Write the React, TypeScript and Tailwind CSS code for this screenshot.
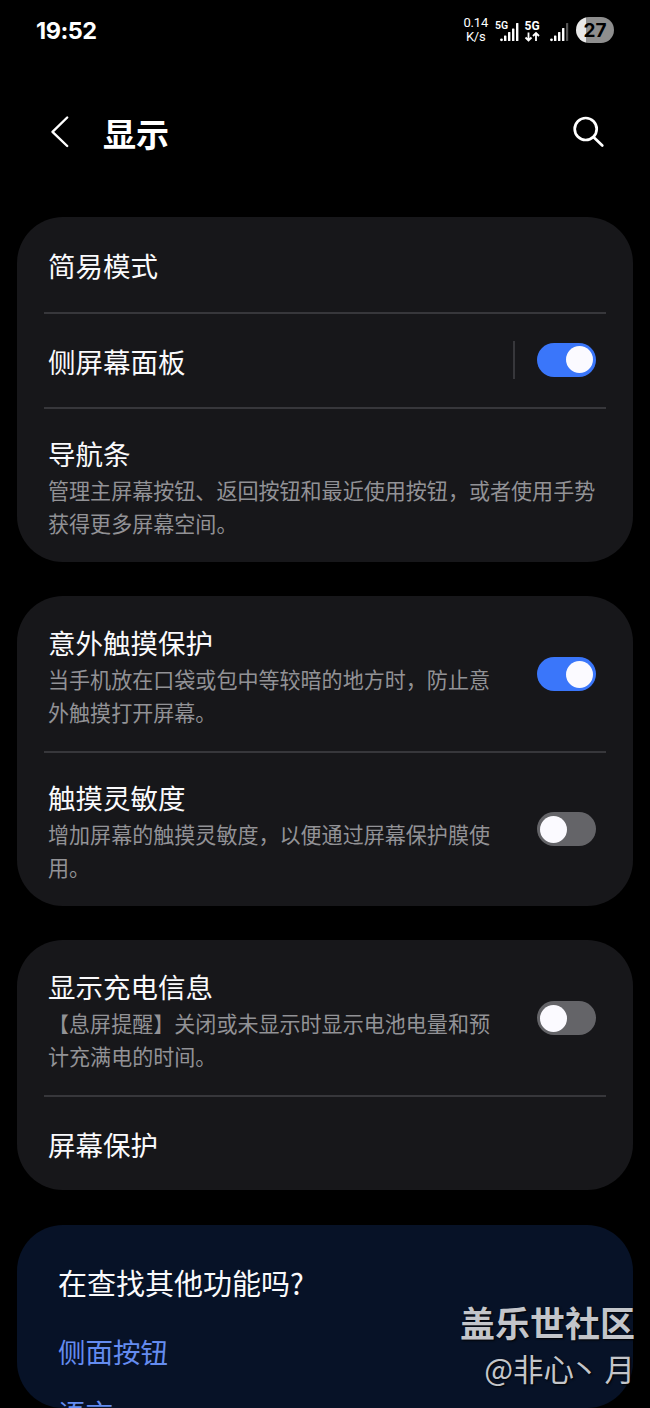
import React from "react";
import clsx from "clsx";

function Toggle({ on }: { on?: boolean }) {
  return (
    <button
      role="switch"
      aria-checked={!!on}
      className={clsx(
        "flex h-[34px] w-[59px] shrink-0 items-center rounded-full px-[3px]",
        on ? "justify-end bg-[#3a76fa]" : "justify-start bg-[#646468]"
      )}
    >
      <span className="size-[27px] rounded-full bg-[#fbfaff]" />
    </button>
  );
}

function Divider() {
  return <div className="mx-[27px] h-[2px] shrink-0 bg-[#37373b]" />;
}

function Card({ className, children }: { className?: string; children: React.ReactNode }) {
  return (
    <section className={clsx("mx-[17px] flex flex-col rounded-[46px] bg-[#17171a]", className)}>
      {children}
    </section>
  );
}

type RowProps = {
  title: string;
  lines?: string[];
  toggle?: "on" | "off";
  split?: boolean;
  className: string;
};

function Row({ title, lines, toggle, split, className }: RowProps) {
  return (
    <div className={clsx("flex items-center justify-between pr-[37px] pl-[31px]", className)}>
      <div className="whitespace-nowrap">
        <h2 className="text-[27.5px] leading-10 text-[#fafafc]">{title}</h2>
        {lines && (
          <div className="mt-px text-[21.05px] leading-[33px] text-[#929296]">
            {lines.map((line) => (
              <p key={line}>{line}</p>
            ))}
          </div>
        )}
      </div>
      {toggle && (
        <div className="flex items-center gap-[22px] pb-[2px]">
          {split && <span className="h-[38px] w-[2px] bg-[#37373b]" />}
          <Toggle on={toggle === "on"} />
        </div>
      )}
    </div>
  );
}

function StatusBar() {
  return (
    <header className="flex h-[60px] items-center justify-between pr-9 pl-9 font-[Inter,sans-serif] text-white">
      <span className="pt-px text-[23.5px] font-bold tracking-[-0.5px]">19:52</span>
      <div className="flex items-center">
        <div className="mr-[6px] text-center font-[Roboto,sans-serif] text-[13px] leading-[14px] tracking-[-0.2px]">
          <div>0.14</div>
          <div>K/s</div>
        </div>
        <svg width="75" height="28" viewBox="-1 0 75 28" fill="#fff" className="mr-[7px]">
          <text x="0" y="12.5" fontSize="10.5" fontWeight="600" fontFamily="Roboto">5G</text>
          <circle cx="6.5" cy="23.8" r="1.4" />
          <rect x="9" y="19.5" width="2.4" height="5.5" rx="0.6" />
          <rect x="13" y="16" width="2.4" height="9" rx="0.6" />
          <rect x="17" y="12.5" width="2.4" height="12.5" rx="0.6" />
          <rect x="21" y="7" width="2.4" height="18" rx="0.6" />
          <text x="29.5" y="13.5" fontSize="12" fontWeight="700" fontFamily="Roboto">5G</text>
          <path d="M33.5 16.5v8m-3-3 3 3 3-3M41 25v-8m-3 3 3-3 3 3" fill="none" stroke="#fff" strokeWidth="1.8" />
          <circle cx="56.5" cy="23.8" r="1.4" />
          <rect x="59" y="19.5" width="2.4" height="5.5" rx="0.6" />
          <rect x="63" y="16" width="2.4" height="9" rx="0.6" />
          <rect x="67" y="12" width="2.4" height="13" rx="0.6" />
          <rect x="71" y="7" width="2.2" height="18" rx="0.6" fill="#555" />
        </svg>
        <div className="flex h-[26px] w-[38px] items-center justify-center rounded-full bg-linear-to-r from-[#e8e8e8] from-27% to-[#8e8e8e] to-27% pt-[2px] text-[19px] font-bold text-black">
          27
        </div>
      </div>
    </header>
  );
}

export default function App() {
  return (
    <main className="relative flex h-[1408px] w-[650px] flex-col overflow-hidden bg-black font-['Noto_Sans_CJK_SC',sans-serif]">
      <StatusBar />

      <nav className="flex h-[157px] shrink-0 items-start pt-[50px] pr-[44px] pl-[50px]">
        <svg width="20" height="44" viewBox="0 0 20 44" fill="none" stroke="#fff" strokeWidth="2.4" strokeLinecap="round" strokeLinejoin="round">
          <path d="M17.2 7.5 2.5 21.8 17.2 36" />
        </svg>
        <h1 className="ml-[33px] flex-1 text-[33px] leading-[46px] font-bold text-white">显示</h1>
        <svg width="34" height="44" viewBox="0 0 34 44" fill="none" stroke="#fff" strokeWidth="2.7" strokeLinecap="round">
          <circle cx="13.7" cy="19" r="11" />
          <path d="m21.7 27.2 8.6 8.3" />
        </svg>
      </nav>

      <Card className="mb-[34px] h-[345px] shrink-0">
        <Row title="简易模式" className="h-[95px]" />
        <Divider />
        <Row title="侧屏幕面板" toggle="on" split className="h-[93px]" />
        <Divider />
        <Row
          title="导航条"
          lines={["管理主屏幕按钮、返回按钮和最近使用按钮，或者使用手势", "获得更多屏幕空间。"]}
          className="h-[153px] pt-px"
        />
      </Card>

      <Card className="mb-[34px] h-[310px] shrink-0">
        <Row
          title="意外触摸保护"
          lines={["当手机放在口袋或包中等较暗的地方时，防止意", "外触摸打开屏幕。"]}
          toggle="on"
          className="h-[155px] pt-[3px]"
        />
        <Divider />
        <Row
          title="触摸灵敏度"
          lines={["增加屏幕的触摸灵敏度，以便通过屏幕保护膜使", "用。"]}
          toggle="off"
          className="h-[153px] pt-px"
        />
      </Card>

      <Card className="mb-[35px] h-[250px] shrink-0">
        <Row
          title="显示充电信息"
          lines={["【息屏提醒】关闭或未显示时显示电池电量和预", "计充满电的时间。"]}
          toggle="off"
          className="h-[155px] pt-[3px]"
        />
        <Divider />
        <Row title="屏幕保护" className="h-[93px]" />
      </Card>

      <section className="mx-[17px] h-[183px] shrink-0 overflow-hidden rounded-[46px] bg-[#071227] px-[41px] pt-9">
        <h2 className="text-[29px] leading-[42px] text-[#fafafc]">在查找其他功能吗?</h2>
        <div className="mt-[18px] flex flex-col text-[27.5px] leading-[61px] text-[#648cf0]">
          <a>侧面按钮</a>
          <a>语言</a>
        </div>
      </section>

      {/* community signature over the lower right corner */}
      <div className="absolute right-[15px] bottom-[17px] text-right whitespace-nowrap text-[#c3c5ca] [text-shadow:1px_1px_2px_#000]">
        <div className="text-[35px] leading-[46px] font-bold">盖乐世社区</div>
        <div className="text-[30.5px] leading-[46px]">
          @非心<span className="-ml-[5px] mr-[5px]">丶</span>月
        </div>
      </div>
    </main>
  );
}
